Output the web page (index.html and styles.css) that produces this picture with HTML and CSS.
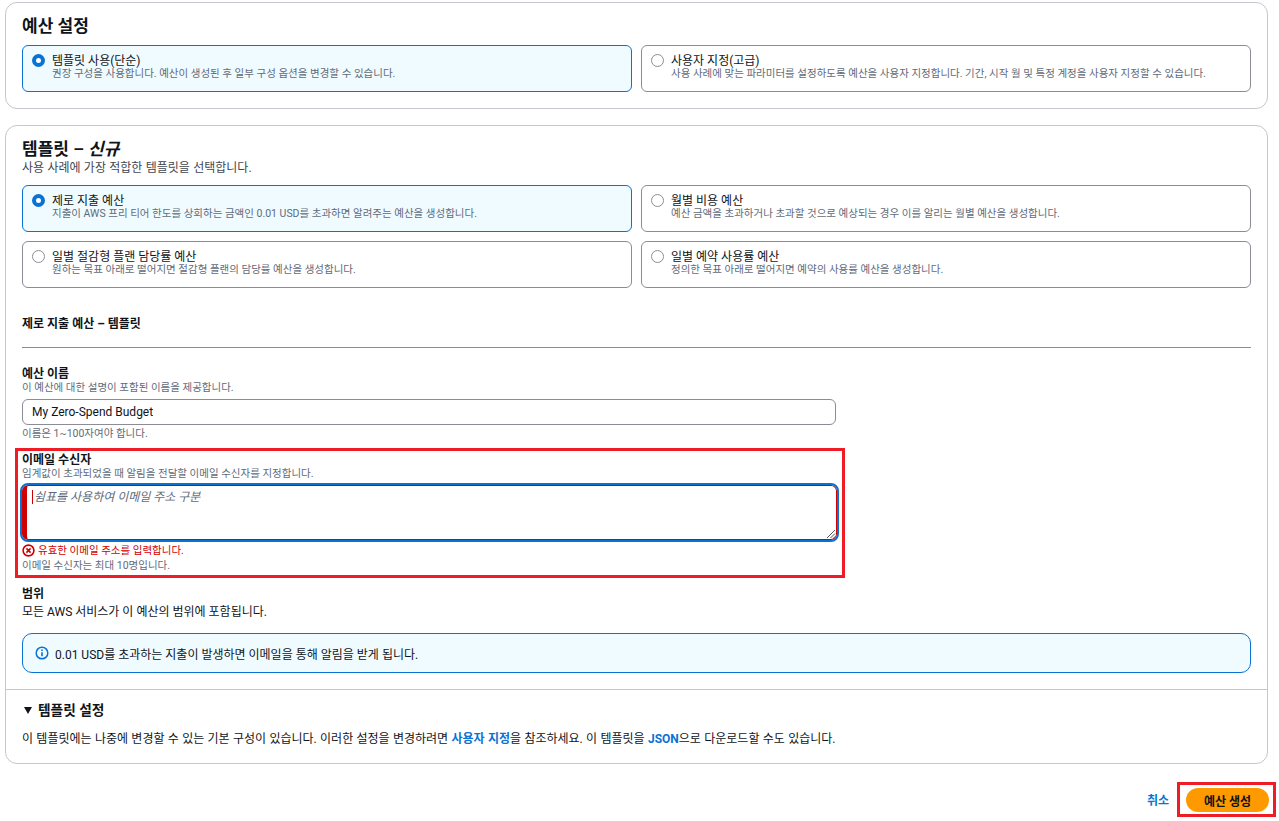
FILE: index.html
```html
<!DOCTYPE html>
<html lang="ko">
<head>
<meta charset="utf-8">
<title>예산 설정</title>
<link rel="stylesheet" href="styles.css">
</head>
<body>
<main class="page">
  <section class="card card-setup">
    <h2 class="card-title">예산 설정</h2>
    <div class="tiles">
      <div class="tile selected"><span class="radio"></span><div><div class="tile-title">템플릿 사용(단순)</div><div class="tile-desc">권장 구성을 사용합니다. 예산이 생성된 후 일부 구성 옵션을 변경할 수 있습니다.</div></div></div>
      <div class="tile"><span class="radio"></span><div><div class="tile-title">사용자 지정(고급)</div><div class="tile-desc">사용 사례에 맞는 파라미터를 설정하도록 예산을 사용자 지정합니다. 기간, 시작 월 및 특정 계정을 사용자 지정할 수 있습니다.</div></div></div>
    </div>
  </section>

  <section class="card card-template">
    <div class="template-body">
      <h2 class="card-title">템플릿 – <em>신규</em></h2>
      <p class="card-sub">사용 사례에 가장 적합한 템플릿을 선택합니다.</p>
      <div class="tiles tiles-grid">
        <div class="tile selected"><span class="radio"></span><div><div class="tile-title">제로 지출 예산</div><div class="tile-desc">지출이 AWS 프리 티어 한도를 상회하는 금액인 0.01 USD를 초과하면 알려주는 예산을 생성합니다.</div></div></div>
        <div class="tile"><span class="radio"></span><div><div class="tile-title">월별 비용 예산</div><div class="tile-desc">예산 금액을 초과하거나 초과할 것으로 예상되는 경우 이를 알리는 월별 예산을 생성합니다.</div></div></div>
        <div class="tile"><span class="radio"></span><div><div class="tile-title">일별 절감형 플랜 담당률 예산</div><div class="tile-desc">원하는 목표 아래로 떨어지면 절감형 플랜의 담당률 예산을 생성합니다.</div></div></div>
        <div class="tile"><span class="radio"></span><div><div class="tile-title">일별 예약 사용률 예산</div><div class="tile-desc">정의한 목표 아래로 떨어지면 예약의 사용률 예산을 생성합니다.</div></div></div>
      </div>
      <h3 class="sub-head">제로 지출 예산 – 템플릿</h3>
      <hr class="rule">
      <div class="field field-name">
        <div class="label">예산 이름</div>
        <div class="hint">이 예산에 대한 설명이 포함된 이름을 제공합니다.</div>
        <div class="input">My Zero-Spend Budget</div>
        <div class="hint hint-after">이름은 1~100자여야 합니다.</div>
      </div>
      <div class="field field-email">
        <div class="label">이메일 수신자</div>
        <div class="hint">임계값이 초과되었을 때 알림을 전달할 이메일 수신자를 지정합니다.</div>
        <div class="textarea"><span class="caret"></span><span class="placeholder">쉼표를 사용하여 이메일 주소 구분</span>
          <svg class="grip" width="11" height="11" viewBox="0 0 11 11"><path d="M10 2 2 10M10 5.5 5.5 10M10 8.5 8.5 10" stroke="#555" fill="none"/></svg>
        </div>
        <div class="error">
          <svg width="13" height="13" viewBox="0 0 13 13"><circle cx="6.5" cy="6.5" r="5.4" fill="none" stroke="#d10000" stroke-width="1.6"/><path d="M4.4 4.4l4.2 4.2M8.6 4.4l-4.2 4.2" stroke="#d10000" stroke-width="1.6"/></svg>
          <span>유효한 이메일 주소를 입력합니다.</span>
        </div>
        <div class="hint hint-limit">이메일 수신자는 최대 10명입니다.</div>
      </div>
      <div class="label label-scope">범위</div>
      <p class="scope-text">모든 AWS 서비스가 이 예산의 범위에 포함됩니다.</p>
      <div class="info">
        <svg width="14" height="14" viewBox="0 0 14 14"><circle cx="7" cy="7" r="5.8" fill="none" stroke="#0972d3" stroke-width="1.5"/><path d="M7 6.2v4" stroke="#0972d3" stroke-width="1.6"/><path d="M7 3.6v1.5" stroke="#0972d3" stroke-width="1.6"/></svg>
        <span>0.01 USD를 초과하는 지출이 발생하면 이메일을 통해 알림을 받게 됩니다.</span>
      </div>
    </div>
    <div class="expand">
      <div class="expand-head"><span class="caret-down"></span><span>템플릿 설정</span></div>
      <p class="expand-text">이 템플릿에는 나중에 변경할 수 있는 기본 구성이 있습니다. 이러한 설정을 변경하려면 <a class="link">사용자 지정</a>을 참조하세요. 이 템플릿을 <a class="link">JSON</a>으로 다운로드할 수도 있습니다.</p>
    </div>
  </section>

  <div class="actions">
    <a class="cancel">취소</a>
    <div class="primary-wrap"><button class="primary">예산 생성</button></div>
  </div>
</main>
</body>
</html>
```
FILE: styles.css
```css
* { box-sizing: border-box; }
html, body { margin: 0; padding: 0; background: #fff; }
body {
  width: 1279px;
  height: 821px;
  overflow: hidden;
  font-family: Roboto, "Noto Sans CJK KR", sans-serif;
  font-size: 12px;
  color: #16191f;
}
.page { padding: 2px 11px 0 5px; }
.card {
  border: 1px solid #c6c6cd;
  border-radius: 12px;
  background: #fff;
}
.card-setup { height: 107px; padding: 12px 16px 0; }
.card-template { height: 639px; margin-top: 16px; }
.template-body { padding: 12px 16px 0; height: 563px; }
.card-title {
  margin: 1px 0 0;
  font-size: 17px;
  line-height: 20px;
  font-weight: 700;
  color: #0f141a;
}
.card-title em { font-style: italic; }
.card-sub { margin: 2px 0 0; font-size: 12px; line-height: 14px; color: #424650; word-spacing: 0.35px; }
.tiles { display: grid; grid-template-columns: 610px 610px; column-gap: 9px; margin-top: 9px; }
.tiles-grid { row-gap: 9px; margin-top: 10px; }
.tile {
  display: flex;
  gap: 7px;
  height: 47px;
  padding: 8px 9px 6px;
  border: 1px solid #8c8c94;
  border-radius: 6px;
  background: #fff;
}
.tile.selected { border-color: #0972d3; background: #f0fbff; }
.radio {
  flex: none;
  width: 13px;
  height: 13px;
  margin-top: 0;
  border: 1.5px solid #8c8c94;
  border-radius: 50%;
  background: #fff;
}
.selected .radio { border: 4px solid #0972d3; }
.tile-title { font-size: 12px; line-height: 14px; color: #0f141a; }
.tile-desc { font-size: 10.5px; line-height: 12px; color: #5f6b7a; margin-top: 0; }
.sub-head {
  margin: 29px 0 0;
  font-size: 12px;
  line-height: 14px;
  font-weight: 700;
  color: #0f141a;
}
.rule { margin: 16px 0 0; border: 0; border-top: 1px solid #8c8c94; }
.field-name { margin-top: 20px; }
.label { font-size: 12px; line-height: 13px; font-weight: 700; color: #0f141a; }
.hint { font-size: 10.5px; line-height: 13px; color: #5f6b7a; }
.input {
  width: 814px;
  height: 26px;
  margin-top: 5px;
  padding: 0 9px;
  border: 1px solid #8c8c94;
  border-radius: 6px;
  font-size: 12px;
  line-height: 24px;
  color: #0f141a;
}
.hint-after { margin-top: 2px; }
.field-email { position: relative; margin-top: 14px; }
.field-email::after {
  content: "";
  box-sizing: border-box;
  position: absolute;
  left: -7px;
  top: -6px;
  width: 830px;
  height: 130px;
  border: 3px solid #ee1c25;
  pointer-events: none;
}
.textarea {
  position: relative;
  display: flex;
  gap: 0;
  width: 815px;
  height: 55px;
  margin-top: 5px;
  padding: 4px 0 0 5px;
  border: 1px solid #d10000;
  border-left-width: 5px;
  border-radius: 6px;
  outline: 2px solid #0972d3;
  outline-offset: 0;
  background: #fff;
}
.caret { width: 1px; height: 14px; background: #d10000; margin-right: 1px; }
.placeholder { font-size: 12px; line-height: 14px; font-style: italic; color: #5f6b7a; }
.grip { position: absolute; right: 0; bottom: 0; }
.error {
  display: flex;
  align-items: center;
  gap: 3px;
  margin-top: 3px;
  font-size: 10.5px;
  line-height: 15px;
  color: #d10000;
}
.hint-limit { margin-top: 1px; }
.label-scope { margin-top: 16px; }
.scope-text { margin: 4px 0 0; font-size: 12px; line-height: 14px; color: #0f141a; }
.info {
  display: flex;
  align-items: center;
  gap: 6px;
  height: 40px;
  margin-top: 14px;
  padding-left: 12px;
  border: 1px solid #0972d3;
  border-radius: 10px;
  background: #f0fbff;
  font-size: 12px;
  color: #0f141a;
}
.expand { border-top: 1px solid #c6c6cd; padding: 12px 16px 0; }
.expand-head {
  display: flex;
  align-items: center;
  gap: 6px;
  font-size: 13.7px;
  line-height: 17px;
  font-weight: 700;
  color: #0f141a;
}
.caret-down {
  width: 0;
  height: 0;
  margin-left: 2px;
  border-left: 4px solid transparent;
  border-right: 4px solid transparent;
  border-top: 7px solid #0f141a;
}
.expand-text { margin: 13px 0 0; font-size: 12px; line-height: 14px; color: #0f141a; word-spacing: 0.35px; }
.link { color: #0972d3; font-weight: 700; }
.actions {
  display: flex;
  justify-content: flex-end;
  align-items: center;
  gap: 8px;
  margin: 18px -8px 0 0;
}
.cancel { font-size: 12px; font-weight: 700; color: #0972d3; }
.primary-wrap { padding: 3px 4px 2px 6px; border: 3px solid #ee1c25; }
.primary {
  display: block;
  width: 83px;
  height: 24px;
  padding: 0;
  border: 0;
  border-radius: 12px;
  background: #ff9900;
  font: 700 12px Roboto, "Noto Sans CJK KR", sans-serif;
  color: #0f141a;
}
```
